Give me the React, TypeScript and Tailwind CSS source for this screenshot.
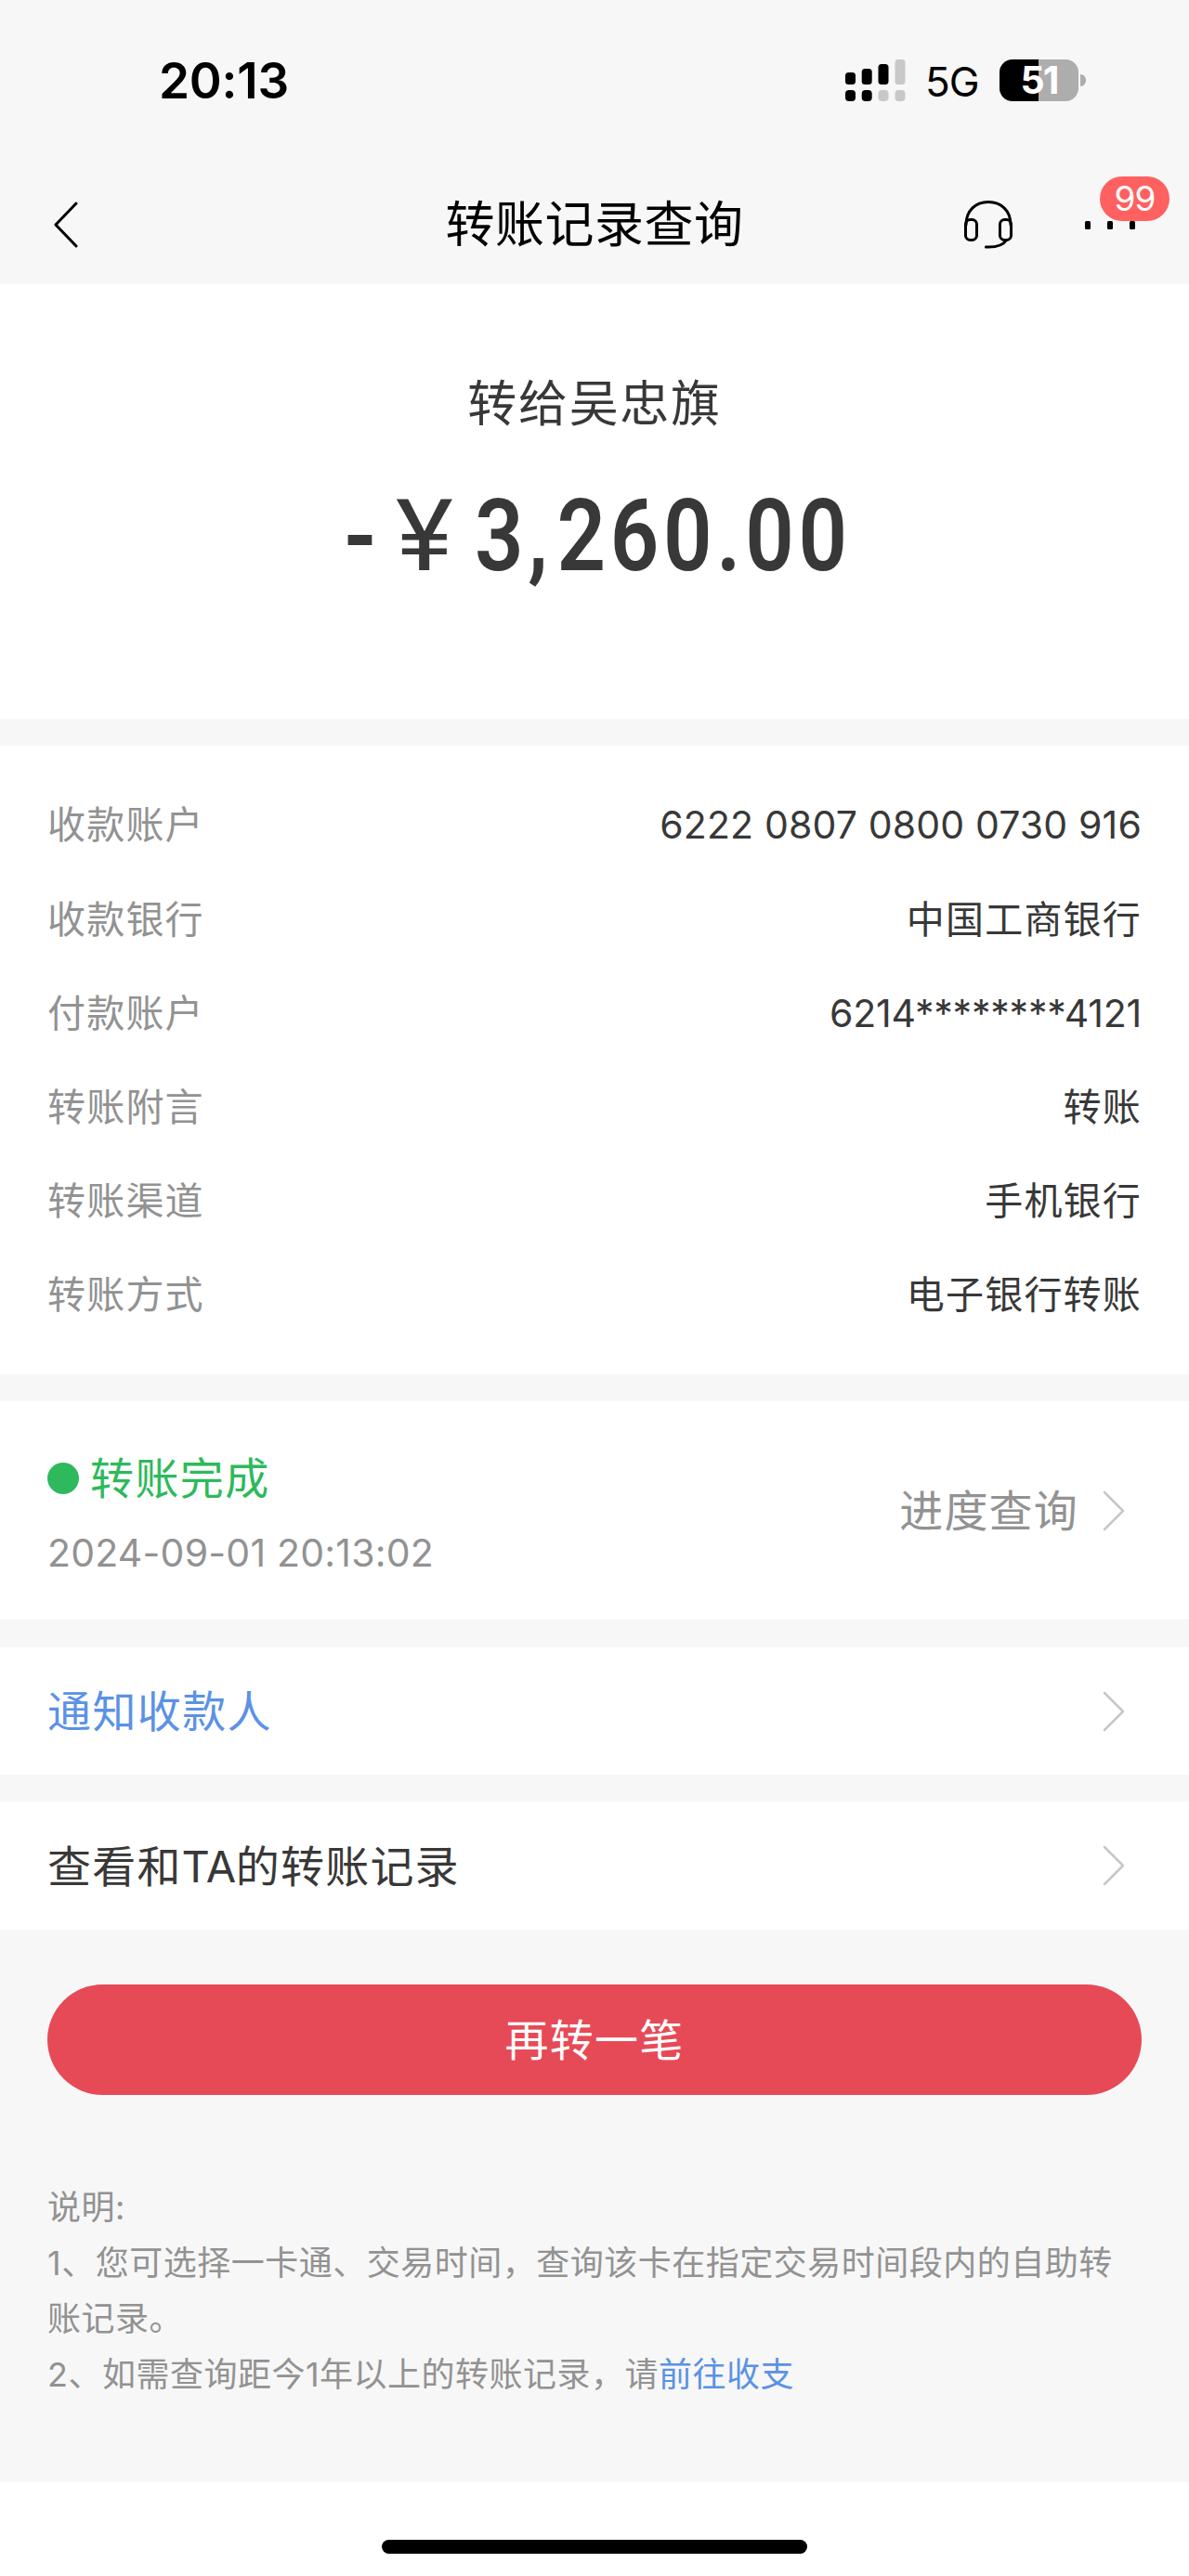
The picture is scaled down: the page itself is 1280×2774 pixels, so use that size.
interface DetailRow {
  label: string;
  value: string;
  valueClass?: string;
}

const detalles: DetailRow[] = [
  { label: "收款账户", value: "6222 0807 0800 0730 916", valueClass: "tracking-[0.15px]" },
  { label: "收款银行", value: "中国工商银行" },
  { label: "付款账户", value: "6214********4121", valueClass: "tracking-[-0.2px]" },
  { label: "转账附言", value: "转账" },
  { label: "转账渠道", value: "手机银行" },
  { label: "转账方式", value: "电子银行转账" },
];

function SignalIcon() {
  return (
    <svg width="65" height="45" viewBox="0 0 65 45">
      <rect x="0" y="14" width="11" height="13" rx="3.5" fill="#000" />
      <rect x="17.7" y="10" width="11" height="17" rx="3.5" fill="#000" />
      <rect x="35.5" y="5" width="11" height="22" rx="3.5" fill="#000" />
      <rect x="53.5" y="0" width="11" height="27" rx="3.5" fill="#c8c8c8" />
      <rect x="0" y="33" width="11" height="12" rx="4" fill="#000" />
      <rect x="17.7" y="33" width="11" height="12" rx="4" fill="#000" />
      <rect x="35.5" y="33" width="11" height="12" rx="4" fill="#c8c8c8" />
      <rect x="53.5" y="33" width="11" height="12" rx="4" fill="#c8c8c8" />
    </svg>
  );
}

function Battery() {
  return (
    <div className="flex items-center gap-[2px]">
      <div className="flex h-[45px] w-[85px] items-center justify-center rounded-[14px] bg-linear-to-r from-black from-50% to-[#adadad] to-50% pt-px text-[41px] leading-none font-bold tracking-[-2px] text-white">
        51
      </div>
      <div className="h-[13px] w-[6px] rounded-r-full bg-[#adadad]" />
    </div>
  );
}

function BackIcon() {
  return (
    <svg width="28" height="52" viewBox="0 0 28 52" fill="none" stroke="#000" strokeWidth="3" strokeLinecap="round" strokeLinejoin="round">
      <path d="M25 3 3 26l22 23" />
    </svg>
  );
}

function HeadsetIcon() {
  return (
    <svg width="54" height="54" viewBox="0 0 54 54" fill="none" stroke="#000" strokeWidth="3" strokeLinecap="round" strokeLinejoin="round">
      <path d="M3 27C3 12 13 2.500 27 2.500S51 12 51 27" />
      <rect x="2.500" y="21.500" width="12" height="22" rx="5" />
      <rect x="39.500" y="21.500" width="12" height="22" rx="5" />
      <path d="M46.500 43.500C43 49 35 51.500 24.500 51" />
    </svg>
  );
}

function ChevronRight() {
  return (
    <svg width="24" height="44" viewBox="0 0 24 44" fill="none" stroke="#c7c7c7" strokeWidth="2.500" strokeLinecap="round" strokeLinejoin="round">
      <path d="m2 2 20 20L2 42" />
    </svg>
  );
}

export default function App() {
  return (
    <div className="flex h-[2774px] w-[1280px] flex-col bg-[#f7f7f7] font-['Inter','Noto_Sans_CJK_SC',sans-serif] text-[#383838]">
      {/* Status bar */}
      <div className="flex h-[178px] shrink-0 items-center justify-between pr-[111px] pb-[6px] pl-[171px] text-black">
        <div className="pt-[2px] text-[53px] leading-none font-semibold tracking-[-0.2px]">20:13</div>
        <div className="flex items-center">
          <SignalIcon />
          <span className="ml-[21px] w-[80px] pt-[4px] text-[44px] leading-none tracking-[-1px]">5G</span>
          <Battery />
        </div>
      </div>

      {/* Nav bar */}
      <div className="grid h-[128px] shrink-0 grid-cols-[1fr_auto_1fr] items-center text-black">
        <div className="pl-[57px]">
          <BackIcon />
        </div>
        <h1 className="text-[53px] leading-none tracking-[0.5px]">转账记录查询</h1>
        <div className="flex items-center justify-end pr-[58px]">
          <HeadsetIcon />
          <div className="relative ml-[77px] flex gap-[18px]">
            <span className="h-[9px] w-[6px] rounded-[1.5px] bg-black" />
            <span className="h-[9px] w-[6px] rounded-[1.5px] bg-black" />
            <span className="h-[9px] w-[6px] rounded-[1.5px] bg-black" />
            <span className="absolute bottom-[9px] left-[16px] flex h-[48px] w-[75px] items-center justify-center rounded-full bg-[#ff6060] text-[37px] leading-none tracking-[-1px] text-white">
              99
            </span>
          </div>
        </div>
      </div>

      {/* Amount */}
      <div className="flex h-[468px] shrink-0 flex-col items-center bg-white pt-[101px]">
        <p className="text-[53px] leading-[56px] tracking-[1.7px]">转给吴忠旗</p>
        <p className="mt-[65px] flex w-[540px] items-center font-['Roboto'] text-[107px] leading-[100px] font-semibold whitespace-nowrap">
          <span className="w-[56px] shrink-0 origin-left scale-x-90">-</span>
          <span className="w-[85px] shrink-0 origin-left scale-x-110 font-normal">¥</span>
          <span className="shrink-0 origin-left scale-x-[0.86] tracking-[5.5px]">
            3<span className="tracking-[11px]">,</span>260.00
          </span>
        </p>
      </div>

      {/* Details */}
      <div className="mt-[29px] flex h-[677px] shrink-0 flex-col bg-white px-[51px] pt-[35.5px] text-[41px]">
        {detalles.map((row) => (
          <div key={row.label} className="flex h-[101.2px] items-center justify-between">
            <span className="tracking-[1.2px] text-[#929292]">{row.label}</span>
            <span className={row.valueClass ?? "tracking-[1.2px]"}>{row.value}</span>
          </div>
        ))}
      </div>

      {/* Transfer status */}
      <div className="mt-[29px] flex h-[235px] shrink-0 items-center justify-between bg-white pr-[69px] pl-[51px]">
        <div className="pt-[7px]">
          <div className="flex items-center gap-[12px] text-[47px] leading-[56px] tracking-[1.4px] text-[#2eb95c]">
            <span className="size-[34px] rounded-full bg-[#2eb95c]" />
            转账完成
          </div>
          <p className="mt-[27px] text-[41px] leading-[50px] tracking-[0.2px] text-[#929292]">2024-09-01 20:13:02</p>
        </div>
        <div className="flex items-center gap-[26px] text-[47px] leading-none tracking-[1.2px] text-[#929292]">
          进度查询
          <ChevronRight />
        </div>
      </div>

      <div className="mt-[30px] flex h-[137px] shrink-0 items-center justify-between bg-white pr-[69px] pl-[51px] text-[47px] tracking-[1.4px] text-[#5b92e5]">
        <span className="pt-[2px]">通知收款人</span>
        <ChevronRight />
      </div>

      <div className="mt-[29px] flex h-[138px] shrink-0 items-center justify-between bg-white pr-[69px] pl-[51px] text-[47px] tracking-[1.2px]">
        <span className="pt-[2px]">
          查看和<span className="tracking-[-0.3px]">TA</span>的转账记录
        </span>
        <ChevronRight />
      </div>

      <button className="mx-[51px] mt-[59px] h-[119px] shrink-0 rounded-full bg-[#e74a57] pt-[2px] text-[47px] tracking-[1.2px] text-white">
        再转一笔
      </button>

      {/* Notes */}
      <div className="mt-[91px] h-[326px] shrink-0 pr-[51px] pl-[51px] text-[36px] leading-[60px] tracking-[0.5px] text-[#929292]">
        <p>说明:</p>
        <p>1、您可选择一卡通、交易时间，查询该卡在指定交易时间段内的自助转账记录。</p>
        <p>
          2、如需查询距今1年以上的转账记录，请<span className="text-[#5b92e5]">前往收支</span>
        </p>
      </div>

      {/* Home indicator */}
      <div className="flex flex-1 justify-center bg-white pt-[62px]">
        <div className="h-[15px] w-[458px] rounded-full bg-black" />
      </div>
    </div>
  );
}
